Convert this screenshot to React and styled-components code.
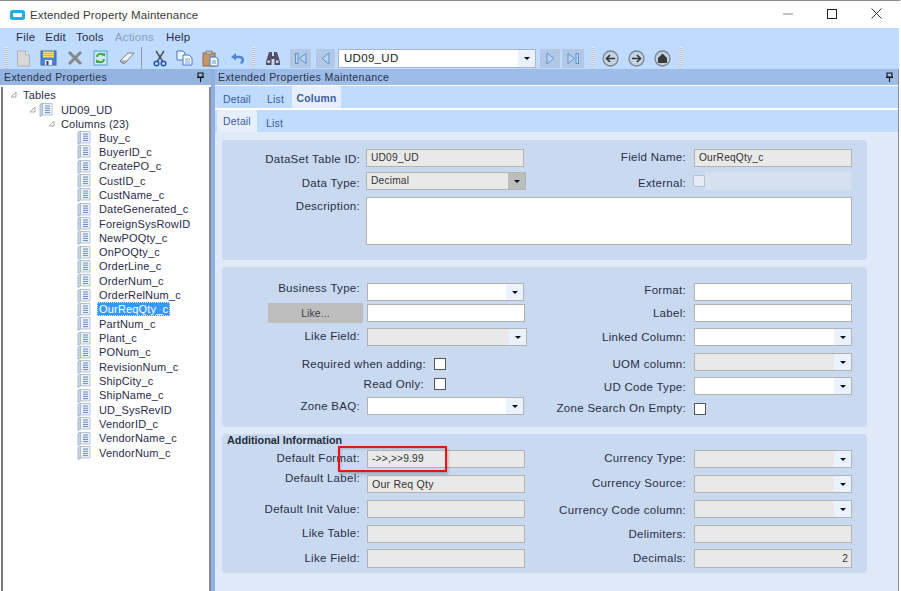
import React from 'react';
import styled, { createGlobalStyle } from 'styled-components';

const Global = createGlobalStyle`
  html, body { margin: 0; padding: 0; background: #fff; overflow: hidden; }
  body { font-family: "Liberation Sans", Arial, sans-serif; }
  #root { width: 901px; height: 591px; }
`;

const Page = styled.div`
  position: relative; width: 899px; height: 590px; border-top: 1px solid #8a8a8a;
  display: flex; flex-direction: column; overflow: hidden; background: #fff; border-right: 2px solid transparent;
`;
const TitleBar = styled.div`
  height: 27px; flex: none; display: flex; align-items: center; padding-left: 10px; background: #fff;
`;
const TitleText = styled.span`
  font-size: 11.5px; letter-spacing: 0.14px; color: #3a3a3a; margin-left: 5px;
`;
const WinButtons = styled.div`
  margin-left: auto; display: flex; align-items: center; gap: 34px; padding-right: 17px; margin-bottom: 2px;
`;
const Band = styled.div`
  height: 41px; flex: none; background: #bfdbff; display: flex; flex-direction: column; border-left: 2px solid #bfdbff;
`;
const MenuBar = styled.div`
  height: 18px; display: flex; align-items: center; padding-left: 14px; gap: 11px;
  background: #bfdbff;
`;
const MenuItem = styled.span`
  font-size: 11.5px; letter-spacing: 0.2px; color: ${p => (p.$off ? '#8ea0b5' : '#2c2c48')};
  margin-left: ${p => p.$extra || 0}px;
`;
const ToolBar = styled.div`
  height: 22px; display: flex; align-items: center; padding-left: 3px; margin-top: 1px;
`;
const Grip = styled.div`
  width: 3px; height: 22px; margin-left: ${p => p.$ml || 0}px;
  background: repeating-linear-gradient(to bottom, #e9e9e9 0 1px, #b5c2d2 1px 2px);
`;
const ToolIcon = styled.div`
  width: 17px; height: 17px; flex: none; margin-left: ${p => p.$ml || 0}px; display: flex; align-items: center; justify-content: center;
`;
const Sep = styled.div`
  width: 1px; height: 22px; background: #8f9aa8; margin-left: ${p => p.$ml || 0}px;
`;
const NavButton = styled.div`
  width: ${p => p.$w || 20}px; height: 19px; flex: none; background: #b2c8e4; margin-left: ${p => p.$ml || 0}px;
  display: flex; align-items: center; justify-content: center;
`;
const NavCombo = styled.div`
  width: 198px; height: 19px; flex: none; box-sizing: border-box; border: 1px solid #adb5c0; background: #fff; margin-left: 3px;
  display: flex; align-items: center; font-size: 11.5px; letter-spacing: 0.3px; color: #222; padding-left: 5px;
`;
const NavArrow = styled.div`
  margin-left: auto; width: 17px; height: 100%; background: #e8f1fc; display: flex; align-items: center; justify-content: center;
`;
const Caret = styled.i`
  display: block; width: 0; height: 0; border-left: 3px solid transparent; border-right: 3px solid transparent; border-top: 3px solid #111;
`;
const Body = styled.div`
  flex: 1; display: flex; min-height: 0; background: #fff;
`;
const LeftPane = styled.div`
  width: 211px; flex: none; display: flex; flex-direction: column; box-sizing: border-box;
`;
const DockHeader = styled.div`
  height: 16px; flex: none; background: ${p => (p.$left ? '#93b5e0' : '#9dbde8')}; display: flex; align-items: center;
  font-size: 10.6px; letter-spacing: 0.38px; color: #27324c; padding: 0 ${p => (p.$left ? 6 : 4)}px 0 ${p => (p.$left ? 4 : 3)}px; justify-content: space-between;
`;
const TreeBox = styled.div`
  flex: 1; margin-top: 2px; margin-left: 1px; background: #fff; border-left: 2px solid #777; border-right: 2px solid #8c8c8c;
`;
const Splitter = styled.div`
  width: 4px; flex: none; background: #8fb0e0;
`;
const TreeRow = styled.div`
  height: ${p => p.$h || 14.32}px; display: flex; align-items: center; padding-left: ${p => p.$pad}px;
  font-size: 11px; letter-spacing: 0.18px; color: #2b2b4a; white-space: nowrap;
`;
const TreeLabel = styled.span`
  margin-left: ${p => p.$ml || 0}px; padding: 1px 2px 1px 2px; line-height: 12px;
  ${p => (p.$sel ? 'background:#3399ff;color:#fff;outline:1px dotted #cfe4ff;outline-offset:-1px;' : '')}
`;
const RightPane = styled.div`
  flex: 1; display: flex; flex-direction: column; min-width: 0; border-right: 1px solid #8e8e8e;
`;
const TabStrip = styled.div`
  height: ${p => p.$h}px; flex: none; background: #bfdbff; display: flex; align-items: flex-end; margin-top: ${p => p.$mt}px; padding-left: ${p => p.$pl}px;
`;
const Tab = styled.div`
  height: ${p => p.$h || 21}px; width: ${p => p.$w}px; box-sizing: border-box; display: flex; align-items: center; justify-content: center;
  font-size: 10.4px; letter-spacing: 0.2px; color: #3d5c9c; font-weight: ${p => (p.$bold ? 600 : 400)};
  padding-top: ${p => p.$pt || 0}px;
  background: ${p => (p.$on ? '#e6effb' : 'transparent')}; border-radius: 2px 2px 0 0;
`;
const Content = styled.div`
  flex: 1; background: #dfe9f7; padding: 8px 31px 0 7px; display: flex; flex-direction: column; gap: 7px;
`;
const Group = styled.div`
  height: ${p => p.$h}px; flex: none; box-sizing: border-box; background: #c9daf0; border-radius: 4px;
`;
const GroupTitle = styled.div`
  height: 16px; padding-left: 5px; font-size: 10.8px; font-weight: 700; color: #1f2a3a; line-height: 13px;
`;
const Cols = styled.div`
  display: grid; grid-template-columns: 303px 1fr; padding-top: ${p => p.$pt || 0}px; height: ${p => p.$ch}px;
`;
const Col = styled.div`
  display: flex; flex-direction: column; align-items: stretch;
`;
const Row = styled.div`
  display: flex; align-items: flex-start; margin-top: ${p => p.$mt || 0}px; height: ${p => p.$h || 18}px; flex: none;
`;
const Label = styled.div`
  width: ${p => p.$w}px; flex: none; font-size: 11.5px; letter-spacing: 0.29px; color: #2a2d48; white-space: nowrap;
  line-height: 14px; margin-top: ${p => p.$pt ?? 1}px; box-sizing: border-box;
  display: flex; justify-content: flex-end;
`;
const Field = styled.div`
  width: ${p => p.$w || 158}px; height: ${p => p.$h || 18}px; box-sizing: border-box; flex: none; margin-left: ${p => p.$ml}px;
  border: 1px solid #b3b3b3; background: ${p => (p.$off ? '#e9e9e9' : '#fff')};
  font-size: ${p => p.$fs || 10.2}px; letter-spacing: 0.2px; color: #333; display: flex; align-items: center;
  padding: 0 3px 1px 4px; justify-content: ${p => (p.$right ? 'flex-end' : 'flex-start')}; overflow: hidden;
`;
const ComboButton = styled.div`
  margin-left: auto; margin-right: -3px; margin-bottom: -1px; width: ${p => p.$w || 17}px; height: 16px; flex: none;
  background: ${p => (p.$gray ? '#bdbdbd' : '#e9f2fd')}; display: flex; align-items: center; justify-content: center;
`;
const Check = styled.div`
  width: 12px; height: 12px; box-sizing: border-box; flex: none; background: ${p => (p.$off ? '#e4ebf5' : '#fff')};
  border: 1px solid ${p => (p.$off ? '#b9c3cf' : '#555')}; margin-left: ${p => p.$ml}px; margin-top: ${p => p.$mt || 0}px;
`;
const ExternalBar = styled.div`
  width: 146px; height: 18px; background: #d6e1f0;
`;
const Button = styled.div`
  width: 95px; height: 20px; margin-left: 46px; margin-top: -1px; background: #bdbdbd; color: #3a3a50; font-size: 10.2px; letter-spacing: 0.2px;
  display: flex; align-items: center; justify-content: center; flex: none;
`;
const Callout = styled.div`
  position: absolute; left: 338px; top: 445px; width: 109px; height: 26px; box-sizing: border-box; border: 2px solid #ef0f14;
  box-shadow: 1px 2px 3px rgba(60,60,60,.35), inset 1px 1px 2px rgba(60,60,60,.25); pointer-events: none;
`;

const Expander = ({ ml = 0 }) => (
  <svg width="7" height="7" viewBox="0 0 7 7" style={{ marginLeft: ml, flex: 'none' }}>
    <path d="M6 1V6H1Z" fill="#fff" stroke="#a9a9a9" strokeWidth="1" />
  </svg>
);
const ColumnIcon = ({ ml = 0 }) => (
  <svg width="15" height="15" viewBox="0 0 15 15" style={{ marginLeft: ml, flex: 'none' }}>
    <path d="M1 2.5 3.5 1V13L1 14.5Z" fill="#c8d4e2" stroke="#9aa9bb" strokeWidth=".8" />
    <path d="M3.5 1.5H13V13H3.5Z" fill="#eef3f9" stroke="#a5b4c6" strokeWidth=".8" />
    <path d="M6 4H11M6 6.2H11M6 8.4H11M6 10.6H11" stroke="#5f88c4" strokeWidth="1" />
  </svg>
);
const Pin = () => (
  <svg width="9" height="10" viewBox="0 0 9 10">
    <path d="M2 1H7V5H2ZM1 5.5H8M4.5 6V10" fill="none" stroke="#111" strokeWidth="1.1" />
  </svg>
);
const AppLogo = () => (
  <svg width="15" height="10" viewBox="0 0 15 10">
    <rect width="15" height="10" rx="2.5" fill="#22aee0" />
    <rect x="3" y="3" width="9" height="4" rx="1" fill="#fff" />
  </svg>
);
const NewIcon = () => (
  <svg width="15" height="17" viewBox="0 0 15 17"><path d="M1.5 1H9.5L13.5 5V16H1.5Z" fill="#d8d8d8" stroke="#b0b0b0" /><path d="M9.5 1V5H13.5" fill="#efefef" stroke="#b0b0b0" /></svg>
);
const SaveIcon = () => (
  <svg width="17" height="16" viewBox="0 0 17 16"><rect x="1" y="1" width="15" height="14" fill="#4a82d8" stroke="#3a68b4" /><rect x="3" y="1.5" width="11" height="6" fill="#f5dc6a" /><path d="M3 3.5H14M3 5.5H14" stroke="#c9a93a" strokeWidth=".7" /><rect x="5" y="10" width="7" height="5" fill="#e9edf3" /><rect x="6.5" y="11" width="2" height="4" fill="#39445a" /></svg>
);
const DeleteIcon = () => (
  <svg width="16" height="16" viewBox="0 0 16 16"><path d="M2 2 14 14M14 2 2 14" stroke="#868686" strokeWidth="3" /></svg>
);
const RefreshIcon = () => (
  <svg width="15" height="16" viewBox="0 0 15 16"><rect x="1" y="1" width="13" height="14" fill="#cfe9f8" stroke="#4aa0d8" /><path d="M4 7A3.5 3.5 0 0 1 10.5 5.5M11 9A3.5 3.5 0 0 1 4.5 10.5" fill="none" stroke="#3fa646" strokeWidth="2" /><path d="M9 3.5 12 3V7ZM6 12.5 3 13V9Z" fill="#3fa646" /></svg>
);
const EraserIcon = () => (
  <svg width="16" height="14" viewBox="0 0 16 14"><path d="M1 10 9 2H15L8 10 6 12H3Z" fill="#f2f2f2" stroke="#77808c" /><path d="M1 10H8L6 12H3Z" fill="#b9c1cb" stroke="#77808c" strokeWidth=".7" /></svg>
);
const ScissorsIcon = () => (
  <svg width="14" height="17" viewBox="0 0 14 17"><path d="M3 1 9.5 11M11 1 4.5 11" stroke="#4a4a4a" strokeWidth="1.4" /><circle cx="3.5" cy="13.5" r="2.3" fill="none" stroke="#2456b8" strokeWidth="1.5" /><circle cx="10.5" cy="13.5" r="2.3" fill="none" stroke="#2456b8" strokeWidth="1.5" /></svg>
);
const CopyIcon = () => (
  <svg width="17" height="16" viewBox="0 0 17 16"><path d="M1 1H7L9 3V10H1Z" fill="#eef5fd" stroke="#3a78c8" /><path d="M7 5H13L16 8V15H7Z" fill="#fff" stroke="#3a78c8" /><path d="M9 9H14M9 11H14M9 13H14" stroke="#3a78c8" strokeWidth=".7" /></svg>
);
const PasteIcon = () => (
  <svg width="17" height="17" viewBox="0 0 17 17"><rect x="1" y="3" width="12" height="13" fill="#c9986a" stroke="#8a6a4a" /><rect x="4" y="1" width="6" height="3.5" fill="#b9b9b9" stroke="#777" strokeWidth=".7" /><path d="M8 7H14L16 9V16H8Z" fill="#f4f9ff" stroke="#3a78c8" /><path d="M10 11H14M10 13H14" stroke="#3a78c8" strokeWidth=".8" /></svg>
);
const UndoIcon = () => (
  <svg width="15" height="12" viewBox="0 0 15 12"><path d="M3 5H9.5C13.5 5 14 10 10.5 11" fill="none" stroke="#4f86d6" strokeWidth="2.4" /><path d="M6 1V8.5L1 5Z" fill="#4f86d6" /></svg>
);
const Binoculars = () => (
  <svg width="16" height="15" viewBox="0 0 16 15"><path d="M4 1H7V5H9V1H12L15 11V14H9.5V8H6.5V14H1V11Z" fill="#544e62" /><rect x="2.4" y="9.5" width="2.5" height="2.5" fill="#d7d7e3" /><rect x="11" y="9.5" width="2.5" height="2.5" fill="#d7d7e3" /></svg>
);
const NavGlyph = ({ dir, bar }) => (
  <svg width="14" height="13" viewBox="0 0 14 13">
    <g transform={dir === 'l' ? 'translate(14,0) scale(-1,1)' : undefined}>
      <path d={bar ? 'M2 1.5 8.5 6.5 2 11.5Z' : 'M4 1 11 6.5 4 12Z'} fill="#b9d6f7" stroke="#5f93cf" />
      {bar && <rect x="10" y="1.5" width="2.5" height="10" fill="#b9d6f7" stroke="#5f93cf" />}
    </g>
  </svg>
);
const CircleIcon = ({ children }) => (
  <svg width="17" height="17" viewBox="0 0 17 17"><circle cx="8.5" cy="8.5" r="7.5" fill="#c3d3e6" stroke="#7d8590" strokeWidth="1.3" />{children}</svg>
);
const Min = () => <svg width="10" height="10"><path d="M0 5H10" stroke="#999" strokeWidth="1.2" /></svg>;
const Max = () => <svg width="10" height="10"><rect x=".5" y=".5" width="9" height="9" fill="none" stroke="#222" /></svg>;
const CloseX = () => <svg width="11" height="11"><path d="M.5.5 10.5 10.5M10.5.5.5 10.5" stroke="#333" /></svg>;

const columns = ['Buy_c','BuyerID_c','CreatePO_c','CustID_c','CustName_c','DateGenerated_c','ForeignSysRowID','NewPOQty_c','OnPOQty_c','OrderLine_c','OrderNum_c','OrderRelNum_c','OurReqQty_c','PartNum_c','Plant_c','PONum_c','RevisionNum_c','ShipCity_c','ShipName_c','UD_SysRevID','VendorID_c','VendorName_c','VendorNum_c'];

const Combo = ({ w, ml, off, gray, text, bw }) => (
  <Field $w={w} $ml={ml} $off={off}>
    {text}
    <ComboButton $gray={gray} $w={bw}><Caret /></ComboButton>
  </Field>
);
const RW = 161; const RM = 8;

export default function App() {
  return (
    <Page>
      <Global />
      <TitleBar>
        <AppLogo />
        <TitleText>Extended Property Maintenance</TitleText>
        <WinButtons><Min /><Max /><CloseX /></WinButtons>
      </TitleBar>
      <Band>
        <MenuBar>
          <MenuItem>File</MenuItem>
          <MenuItem $extra={-1}>Edit</MenuItem>
          <MenuItem $extra={-1}>Tools</MenuItem>
          <MenuItem $off>Actions</MenuItem>
          <MenuItem $extra={1}>Help</MenuItem>
        </MenuBar>
        <ToolBar>
          <Grip />
          <ToolIcon $ml={7}><NewIcon /></ToolIcon>
          <ToolIcon $ml={8}><SaveIcon /></ToolIcon>
          <ToolIcon $ml={9}><DeleteIcon /></ToolIcon>
          <ToolIcon $ml={9}><RefreshIcon /></ToolIcon>
          <ToolIcon $ml={9}><EraserIcon /></ToolIcon>
          <Sep $ml={6} />
          <ToolIcon $ml={9}><ScissorsIcon /></ToolIcon>
          <ToolIcon $ml={8}><CopyIcon /></ToolIcon>
          <ToolIcon $ml={9}><PasteIcon /></ToolIcon>
          <ToolIcon $ml={10}><UndoIcon /></ToolIcon>
          <Grip $ml={6} />
          <ToolIcon $ml={9}><Binoculars /></ToolIcon>
          <NavButton $ml={9} $w={21}><NavGlyph dir="l" bar /></NavButton>
          <NavButton $ml={5} $w={19}><NavGlyph dir="l" /></NavButton>
          <NavCombo>UD09_UD<NavArrow><Caret /></NavArrow></NavCombo>
          <NavButton $ml={4} $w={20}><NavGlyph /></NavButton>
          <NavButton $ml={2} $w={22}><NavGlyph bar /></NavButton>
          <Grip $ml={7} />
          <ToolIcon $ml={8}><CircleIcon><path d="M13 8.5H5M8 5 4.5 8.5 8 12" fill="none" stroke="#333" strokeWidth="1.6" /></CircleIcon></ToolIcon>
          <ToolIcon $ml={9}><CircleIcon><path d="M4 8.5H12M9 5 12.5 8.5 9 12" fill="none" stroke="#333" strokeWidth="1.6" /></CircleIcon></ToolIcon>
          <ToolIcon $ml={9}><CircleIcon><path d="M8.5 3.5 13 8V13H4V8Z" fill="#3a3a3a" /></CircleIcon></ToolIcon>
          <Grip $ml={8} />
        </ToolBar>
      </Band>
      <Body>
        <LeftPane>
          <DockHeader $left>Extended Properties<Pin /></DockHeader>
          <TreeBox>
            <TreeRow $pad={7} $h={15.5}><Expander /><TreeLabel $ml={4}>Tables</TreeLabel></TreeRow>
            <TreeRow $pad={26} $h={14}><Expander /><ColumnIcon ml={3} /><TreeLabel $ml={5}>UD09_UD</TreeLabel></TreeRow>
            <TreeRow $pad={45} $h={14}><Expander /><TreeLabel $ml={4}>Columns (23)</TreeLabel></TreeRow>
            {columns.map(c => (
              <TreeRow key={c} $pad={74}>
                <ColumnIcon />
                <TreeLabel $ml={5} $sel={c === 'OurReqQty_c'}>{c}</TreeLabel>
              </TreeRow>
            ))}
          </TreeBox>
        </LeftPane>
        <Splitter />
        <RightPane>
          <DockHeader>Extended Properties Maintenance<Pin /></DockHeader>
          <TabStrip $h={22} $mt={1} $pl={0}>
            <Tab $w={44} $pt={3}>Detail</Tab>
            <Tab $w={33} $pt={3}>List</Tab>
            <Tab $w={49} $on $bold $h={22} $pt={2}>Column</Tab>
          </TabStrip>
          <TabStrip $h={22} $mt={2} $pl={2}>
            <Tab $w={40} $on $h={22}>Detail</Tab>
            <Tab $w={35} $pt={3}>List</Tab>
          </TabStrip>
          <Content>
            <Group $h={120}>
              <Cols $pt={9} $ch={41}>
                <Col>
                  <Row><Label $w={138} $pt={3}>DataSet Table ID:</Label><Field $ml={6} $off>UD09_UD</Field></Row>
                  <Row $mt={5}><Label $w={138} $pt={4}>Data Type:</Label><Combo ml={6} w={160} off gray text="Decimal" /></Row>
                </Col>
                <Col>
                  <Row><Label $w={RW} $pt={1}>Field Name:</Label><Field $ml={RM} $off>OurReqQty_c</Field></Row>
                  <Row $mt={5}><Label $w={RW} $pt={4}>External:</Label><Check $off $ml={7} $mt={3} /><ExternalBar /></Row>
                </Col>
              </Cols>
              <Row $mt={7} $h={48}><Label $w={138} $pt={2}>Description:</Label><Field $ml={6} $w={486} $h={48} /></Row>
            </Group>
            <Group $h={160}>
              <Cols $pt={16} $ch={144}>
                <Col>
                  <Row><Label $w={138} $pt={-2}>Business Type:</Label><Combo ml={7} w={157} /></Row>
                  <Row $mt={3}><Button>Like...</Button><Field $ml={4} /></Row>
                  <Row $mt={6}><Label $w={138} $pt={1}>Like Field:</Label><Combo ml={7} w={160} off /></Row>
                  <Row $mt={12} $h={12}><Label $w={204} $pt={-1}>Required when adding:</Label><Check $ml={8} /></Row>
                  <Row $mt={8} $h={12}><Label $w={202} $pt={-1}>Read Only:</Label><Check $ml={10} /></Row>
                  <Row $mt={7}><Label $w={138} $pt={2}>Zone BAQ:</Label><Combo ml={7} w={157} /></Row>
                </Col>
                <Col>
                  <Row><Label $w={RW} $pt={0}>Format:</Label><Field $ml={RM} /></Row>
                  <Row $mt={3}><Label $w={RW} $pt={2}>Label:</Label><Field $ml={RM} /></Row>
                  <Row $mt={6}><Label $w={RW} $pt={2}>Linked Column:</Label><Combo ml={RM} w={158} /></Row>
                  <Row $mt={7}><Label $w={RW} $pt={4}>UOM column:</Label><Combo ml={RM} w={158} off /></Row>
                  <Row $mt={6}><Label $w={RW} $pt={3}>UD Code Type:</Label><Combo ml={RM} w={158} /></Row>
                  <Row $mt={8} $h={12}><Label $w={RW} $pt={-2}>Zone Search On Empty:</Label><Check $ml={8} /></Row>
                </Col>
              </Cols>
            </Group>
            <Group $h={139}>
              <Cols $ch={139}>
                <Col>
                  <GroupTitle>Additional Information</GroupTitle>
                  <Row><Label $w={138} $pt={1}>Default Format:</Label><Field $ml={7} $off $fs={10.2}>-&gt;&gt;,&gt;&gt;9.99</Field></Row>
                  <Row $mt={7}><Label $w={138} $pt={-4}>Default Label:</Label><Field $ml={7} $off $fs={10.6}>Our Req Qty</Field></Row>
                  <Row $mt={7}><Label $w={138} $pt={2}>Default Init Value:</Label><Field $ml={7} $off /></Row>
                  <Row $mt={7}><Label $w={138} $pt={1}>Like Table:</Label><Field $ml={7} $off /></Row>
                  <Row $mt={6} $h={19}><Label $w={138} $pt={2}>Like Field:</Label><Field $ml={7} $off $h={19} /></Row>
                </Col>
                <Col>
                  <Row $mt={16}><Label $w={RW} $pt={1}>Currency Type:</Label><Combo ml={RM} w={158} off /></Row>
                  <Row $mt={7}><Label $w={RW} $pt={1}>Currency Source:</Label><Combo ml={RM} w={158} off /></Row>
                  <Row $mt={7}><Label $w={RW} $pt={3}>Currency Code column:</Label><Combo ml={RM} w={158} off /></Row>
                  <Row $mt={7}><Label $w={RW} $pt={2}>Delimiters:</Label><Field $ml={RM} $off /></Row>
                  <Row $mt={6} $h={19}><Label $w={RW} $pt={2}>Decimals:</Label><Field $ml={RM} $off $right $h={19}>2</Field></Row>
                </Col>
              </Cols>
            </Group>
          </Content>
        </RightPane>
      </Body>
      <Callout />
    </Page>
  );
}
